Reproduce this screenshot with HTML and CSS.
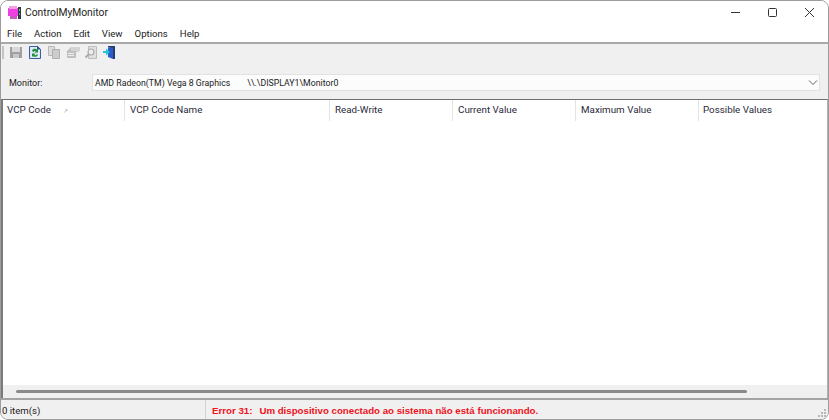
FILE: index.html
```html
<!DOCTYPE html>
<html lang="en">
<head>
<meta charset="utf-8">
<title>ControlMyMonitor</title>
<link rel="stylesheet" href="styles.css">
</head>
<body>
<div class="window">
  <header class="titlebar">
    <svg class="appicon" width="16" height="16" viewBox="0 0 16 16">
      <rect x="1" y="3" width="10" height="8" fill="#ee40e0"/>
      <rect x="2" y="1" width="8" height="3" fill="#f4a0e4"/>
      <rect x="3" y="11" width="7" height="3" fill="#c858c0"/>
      <rect x="11" y="2" width="3" height="12" fill="#2c3a44"/>
      <rect x="12" y="4" width="1" height="2" fill="#70c0a0"/>
      <rect x="12" y="8" width="1" height="2" fill="#7090c0"/>
    </svg>
    <span class="title">ControlMyMonitor</span>
    <div class="winbtns">
      <svg width="37" height="23" viewBox="0 0 37 23"><path d="M14 11.500h9" stroke="#333" fill="none"/></svg>
      <svg width="37" height="23" viewBox="0 0 37 23"><rect x="14.500" y="7.500" width="8" height="8" rx="1" stroke="#333" fill="none"/></svg>
      <svg width="37" height="23" viewBox="0 0 37 23"><path d="M14 7l9 9M23 7l-9 9" stroke="#333" fill="none"/></svg>
    </div>
  </header>
  <nav class="menubar">
    <span class="menu">File</span><span class="menu">Action</span><span class="menu">Edit</span><span class="menu">View</span><span class="menu">Options</span><span class="menu">Help</span>
  </nav>
  <div class="toolbar">
    <i class="grip"></i>
    <svg class="tool" width="16" height="16" viewBox="0 0 16 16"><path d="M2 3h12v11H2z" fill="#a0a0a0"/><rect x="4" y="3" width="8" height="5" fill="#d8d8d8"/><rect x="5" y="10" width="6" height="4" fill="#c8c8c8"/></svg>
    <svg class="tool" width="16" height="16" viewBox="0 0 16 16"><path d="M2.500 2.500h8l3 3v9h-11z" fill="#dfe9f8" stroke="#3a5f9e"/><path d="M10 1.500l4 4h-4z" fill="#2a50a0"/><path d="M5 7a3 3 0 0 1 5-1.500l1-1v4H7.500l1.200-1.200A1.500 1.500 0 0 0 6.500 8zM11 10.500a3 3 0 0 1-5 1.500l-1 1V9.500h3.500L7.300 10.700a1.500 1.500 0 0 0 2.200-.2z" fill="#1f8f3a"/></svg>
    <svg class="tool" width="16" height="16" viewBox="0 0 16 16"><path d="M2.500 2.500h6v9h-6z" fill="#dcdcdc" stroke="#b8b8b8"/><path d="M6.500 5.500h7v9h-7z" fill="#cccccc" stroke="#b0b0b0"/></svg>
    <svg class="tool" width="16" height="16" viewBox="0 0 16 16"><path d="M1 8l5-5h9v4l-4 1v6H2V8z" fill="#c0c0c0"/><path d="M6 3h9v4H6z" fill="#d4d4d4"/><path d="M3 9h6v1H3zM3 11h6v1H3z" fill="#eee"/></svg>
    <svg class="tool" width="16" height="16" viewBox="0 0 16 16"><path d="M4.500 2.500h8v12h-8z" fill="#e0e0e0" stroke="#bcbcbc"/><circle cx="7" cy="8" r="3" fill="#ececec" stroke="#acacac" stroke-width="1.200"/><path d="M5 10l-3.500 3.500" stroke="#a8a8a8" stroke-width="1.800"/></svg>
    <svg class="tool" width="16" height="16" viewBox="0 0 16 16"><path d="M5 4l5-2v13l-5-2z" fill="#2a5cc8"/><path d="M5 2h7v13h-2V3.500H5z" fill="#263c70"/><path d="M0 7h3V4.500L7 8l-4 3.500V9H0z" fill="#23c4d8"/></svg>
  </div>
  <div class="monitorbar">
    <span class="monlabel">Monitor:</span>
    <div class="select">
      <span class="selval">AMD Radeon(TM) Vega 8 Graphics</span><span class="selpath">\\.\DISPLAY1\Monitor0</span>
      <svg class="chev" width="10" height="6" viewBox="0 0 10 6"><path d="M1 .5l4 4 4-4" stroke="#606060" fill="none"/></svg>
    </div>
  </div>
  <section class="list">
    <div class="thead">
      <div class="th w1">VCP Code <span class="sort">↗</span></div>
      <div class="th w2">VCP Code Name</div>
      <div class="th w3">Read-Write</div>
      <div class="th w4">Current Value</div>
      <div class="th w5">Maximum Value</div>
      <div class="th w6">Possible Values</div>
    </div>
    <div class="tbody"></div>
    <div class="hscroll"><i class="thumb"></i></div>
  </section>
  <footer class="status">
    <div class="count">0 item(s)</div>
    <div class="error"><span>Error 31:</span><span>Um dispositivo conectado ao sistema não está funcionando.</span></div>
    <svg class="grip-corner" width="10" height="10" viewBox="0 0 10 10"><path d="M7 1h2v2H7zM4 4h2v2H4zM7 4h2v2H7zM1 7h2v2H1zM4 7h2v2H4zM7 7h2v2H7z" fill="#b8b8b8"/></svg>
  </footer>
</div>
</body>
</html>
```

FILE: styles.css
```css
* { box-sizing: border-box; }
html, body { margin: 0; padding: 0; background: #fff; }
body { width: 829px; height: 420px; overflow: hidden; font-family: Roboto, "Noto Sans", sans-serif; }
.window {
  width: 829px; height: 420px; display: flex; flex-direction: column;
  background: #f0f0f0; border: 1px solid #9c9c9c; border-radius: 8px; overflow: hidden;
  color: #1a1a1a;
}
.titlebar { height: 23px; flex: none; display: flex; align-items: center; background: #fff; padding-left: 6px; }
.appicon { flex: none; }
.title { margin-left: 2px; font-size: 10.300px; line-height: 16px; color: #222; }
.winbtns { margin-left: auto; display: flex; }
.winbtns svg { display: block; }
.menubar { height: 18px; flex: none; display: flex; background: #fff; padding-left: 6px; gap: 12px; font-size: 9.600px; line-height: 19px; }
.toolbar { height: 21px; flex: none; display: flex; align-items: flex-start; border-top: 2px solid #a8a8a8; padding-left: 1px; gap: 3px; background: #f0f0f0; }
.grip { width: 2px; height: 13px; background: #c4c4c4; margin: 2px 1px 0 0; }
.tool { flex: none; }
.monitorbar { height: 36px; flex: none; display: flex; align-items: flex-start; padding-top: 11px; background: #f0f0f0; }
.monlabel { width: 91px; padding-left: 8px; font-size: 9px; line-height: 18px; }
.select {
  width: 728px; height: 17px; background: #fcfcfc; border: 1px solid #e2e2e2; display: flex; align-items: center;
  padding-left: 2px; font-family: Roboto, sans-serif; font-size: 8.750px; color: #222; position: relative;
}
.selpath { margin-left: 17px; }
.chev { position: absolute; right: 1px; top: 5px; }
.list { flex: 1; min-height: 0; display: flex; flex-direction: column; border-top: 1px solid #6e6e6e; border-left: 2px solid #7c7c7c; border-right: 1px solid #b0b0b0; background: #fff; }
.thead { height: 21px; flex: none; display: flex; background: #fff; }
.th { font-size: 9.800px; line-height: 20px; padding-left: 5px; color: #2a2a3a; border-right: 1px solid #e4e4e4; flex: none; }
.w1 { width: 122px; padding-left: 4px; }
.w2 { width: 205px; }
.w3 { width: 123px; }
.w4 { width: 123px; }
.w5 { width: 123px; }
.w6 { flex: 1; border-right: 0; padding-left: 4px; }
.sort { font-size: 6px; color: #999; margin-left: 10px; }
.tbody { flex: 1; background: #fff; }
.hscroll { height: 13px; flex: none; background: #f0f0f0; display: flex; align-items: center; padding: 0 0 0 13px; }
.thumb { width: 731px; height: 3px; background: #8a8a8a; border-radius: 2px; }
.status { height: 21px; flex: none; display: flex; align-items: center; border-top: 2px solid #a4a4a4; background: #f0f0f0; position: relative; }
.count { width: 205px; padding-left: 1px; font-size: 9.600px; height: 19px; line-height: 21px; border-right: 1px solid #d4d4d4; }
.error { padding: 1px 0 0 6px; font-family: "Liberation Sans", sans-serif; font-weight: 700; font-size: 9.700px; color: #f01020; display: flex; gap: 7px; }
.grip-corner { position: absolute; right: 1px; bottom: 1px; }
```
